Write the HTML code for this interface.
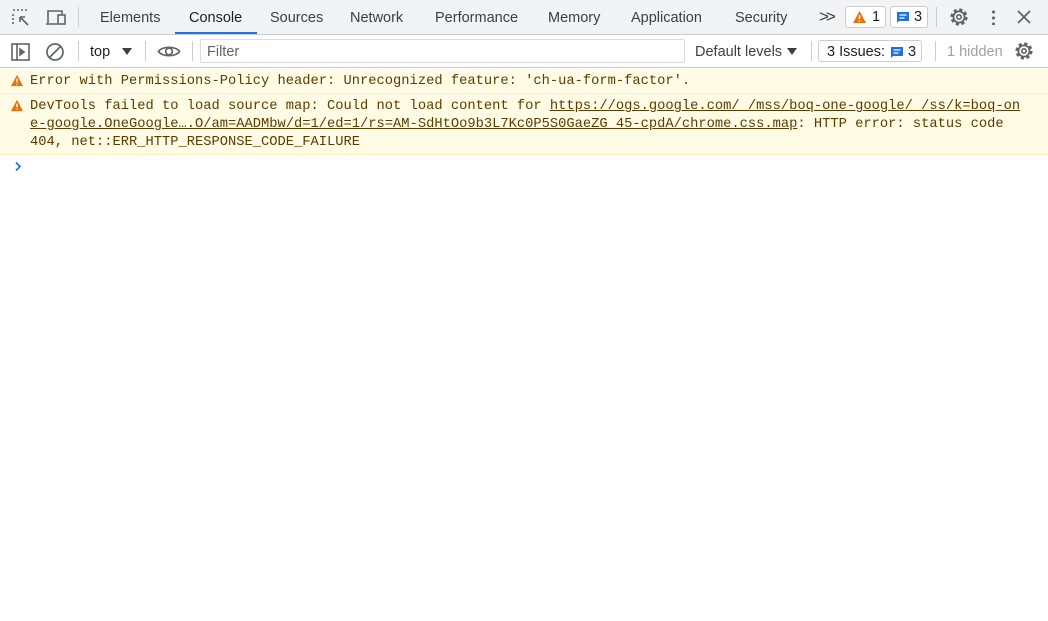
<!DOCTYPE html>
<html><head><style>
*{box-sizing:border-box;margin:0;padding:0}
body{width:1048px;height:621px;background:#fff;font-family:"Liberation Sans",sans-serif;font-size:14px;color:#1f1f1f;position:relative;overflow:hidden}
.bar1{position:absolute;top:0;left:0;width:1048px;height:35px;background:#f1f3f4;border-bottom:1px solid #cbcdd1}
.bar2{position:absolute;top:35px;left:0;width:1048px;height:33px;background:#fff;border-bottom:1px solid #cbcdd1}
.t{position:absolute;top:10px;font-size:14.5px;color:#3c4043}
.sep{position:absolute;width:1px;background:#cbcdd1}
.msg{position:absolute;left:0;width:1048px;background:#fffbe5;border-bottom:1px solid #fff0c0;font-family:"Liberation Mono",monospace;font-size:13.75px;color:#5c3c00;line-height:18px;white-space:pre}
.msg span.u{text-decoration:underline}
.warn{position:absolute;left:10px}
.badge{position:absolute;border:1px solid #cbcdd1;border-radius:3px;height:22px;background:#fff}
</style></head><body>
<svg width="0" height="0" style="position:absolute"><defs><g id="gear"><circle cx="10" cy="10" r="7" fill="none" stroke="#5f6368" stroke-width="3.2" stroke-dasharray="3 2.5"/><circle cx="10" cy="10" r="5.6" fill="none" stroke="#5f6368" stroke-width="1.8"/><circle cx="10" cy="10" r="2.2" fill="none" stroke="#5f6368" stroke-width="1.6"/></g></defs></svg>
<div class="bar1">
<svg style="position:absolute;left:11px;top:8px" width="20" height="20" viewBox="0 0 20 20" fill="none" stroke="#5f6368" stroke-width="1.6"><path d="M2 2h2M6 2h2M10 2h2M2 6v2M2 10v2M2 14v2h2M14 2h2v2" stroke-dasharray="2 2"/><path d="M9 9l8 8M9 9h5M9 9v5"/></svg>
<svg style="position:absolute;left:45px;top:8px" width="22" height="20" viewBox="0 0 22 20" fill="none" stroke="#5f6368" stroke-width="1.6"><path d="M3 15V3h14v3M1 16h11"/><rect x="13" y="7" width="7" height="9"/></svg>
<div class="sep" style="left:78px;top:7px;height:20px"></div>
<div class="t" style="left:100px">Elements</div>
<div class="t" style="left:189px;color:#1f1f1f">Console</div>
<div style="position:absolute;left:175px;top:32px;width:82px;height:2px;background:#1a73e8"></div>
<div class="t" style="left:270px">Sources</div>
<div class="t" style="left:350px">Network</div>
<div class="t" style="left:435px">Performance</div>
<div class="t" style="left:548px">Memory</div>
<div class="t" style="left:631px">Application</div>
<div class="t" style="left:735px">Security</div>
<div class="t" style="left:819px;font-size:17px;top:7px;letter-spacing:-3px">&gt;&gt;</div>
<div class="badge" style="left:845px;top:6px;width:41px"><svg style="position:absolute;left:6px;top:3px" width="15" height="14" viewBox="0 0 15 14"><path d="M7.5 1L14 13H1z" fill="#e8710a"/><path d="M7.5 5v4M7.5 10.5v1" stroke="#fff" stroke-width="1.5"/></svg><span style="position:absolute;left:26px;top:2px;font-size:14.5px">1</span></div>
<div class="badge" style="left:890px;top:6px;width:38px"><svg style="position:absolute;left:5px;top:4px" width="14" height="13" viewBox="0 0 14 13"><path d="M1 1h12v9H3l-2 2z" fill="#1a73e8"/><path d="M3.5 4h7M3.5 7h5" stroke="#fff" stroke-width="1.2"/></svg><span style="position:absolute;left:23px;top:2px;font-size:14.5px">3</span></div>
<div class="sep" style="left:936px;top:7px;height:20px"></div>
<svg style="position:absolute;left:949px;top:7px" width="20" height="20" viewBox="0 0 20 20"><use href="#gear"/></svg>
<div style="position:absolute;left:992px;top:9px;width:3px;height:16px;background:radial-gradient(circle,#5f6368 1.4px,transparent 1.6px) 0 0/3px 6px"></div>
<svg style="position:absolute;left:1017px;top:10px" width="14" height="14" viewBox="0 0 14 14" stroke="#5f6368" stroke-width="1.8"><path d="M1 1l12 12M13 1L1 13"/></svg>
</div>
<div class="bar2">
<svg style="position:absolute;left:11px;top:8px" width="19" height="18" viewBox="0 0 19 18" fill="none" stroke="#5f6368" stroke-width="1.6"><rect x="1" y="1" width="17" height="16"/><path d="M6 1v16"/><path d="M9 6l4 3-4 3z" fill="#5f6368"/></svg>
<svg style="position:absolute;left:45px;top:7px" width="20" height="20" viewBox="0 0 20 20" fill="none" stroke="#5f6368" stroke-width="1.7"><circle cx="10" cy="10" r="8"/><path d="M4.5 15.5l11-11"/></svg>
<div class="sep" style="left:78px;top:6px;height:20px"></div>
<div class="t" style="left:90px;top:9px;color:#1f1f1f">top</div>
<div style="position:absolute;left:122px;top:13px;border-left:5px solid transparent;border-right:5px solid transparent;border-top:7px solid #3c4043"></div>
<div class="sep" style="left:145px;top:6px;height:20px"></div>
<svg style="position:absolute;left:157px;top:9px" width="24" height="15" viewBox="0 0 24 15" fill="none" stroke="#5f6368" stroke-width="1.7"><path d="M1.5 7.5C5 2 19 2 22.5 7.5C19 13 5 13 1.5 7.5z"/><circle cx="12" cy="7.5" r="3.3"/></svg>
<div class="sep" style="left:192px;top:6px;height:20px"></div>
<div style="position:absolute;left:200px;top:4px;width:485px;height:24px;border:1px solid #dadce0;border-radius:2px"><span style="position:absolute;left:6px;top:4px;font-size:14.5px;color:#5f6368">Filter</span></div>
<div class="t" style="left:695px;top:9px;color:#3c4043">Default levels</div>
<div style="position:absolute;left:787px;top:13px;border-left:5px solid transparent;border-right:5px solid transparent;border-top:7px solid #3c4043"></div>
<div class="sep" style="left:811px;top:6px;height:20px"></div>
<div class="badge" style="left:818px;top:5px;width:104px"><span style="position:absolute;left:8px;top:3px;font-size:14.5px">3 Issues:</span><svg style="position:absolute;left:71px;top:5px" width="14" height="13" viewBox="0 0 14 13"><path d="M1 1h12v9H3l-2 2z" fill="#1a73e8"/><path d="M3.5 4h7M3.5 7h5" stroke="#fff" stroke-width="1.2"/></svg><span style="position:absolute;left:89px;top:3px;font-size:14.5px">3</span></div>
<div class="sep" style="left:935px;top:6px;height:20px"></div>
<div class="t" style="left:947px;top:9px;color:#9aa0a6">1 hidden</div>
<svg style="position:absolute;left:1014px;top:6px" width="20" height="20" viewBox="0 0 20 20"><use href="#gear"/></svg>
</div>
<div class="msg" style="top:69px;height:25px;padding:4px 0 0 30px">Error with Permissions-Policy header: Unrecognized feature: 'ch-ua-form-factor'.</div>
<div class="msg" style="top:94px;height:61px;padding:4px 0 0 30px">DevTools failed to load source map: Could not load content for <span class="u">https://ogs.google.com/_/mss/boq-one-google/_/ss/k=boq-on</span>
<span class="u">e-google.OneGoogle….O/am=AADMbw/d=1/ed=1/rs=AM-SdHtOo9b3L7Kc0P5S0GaeZG_45-cpdA/chrome.css.map</span>: HTTP error: status code
404, net::ERR_HTTP_RESPONSE_CODE_FAILURE</div>
<svg class="warn" style="top:74px" width="14" height="13" viewBox="0 0 15 14"><path d="M7.5 1L14 13H1z" fill="#e8710a"/><path d="M7.5 5v4M7.5 10.5v1" stroke="#fff" stroke-width="1.5"/></svg>
<svg class="warn" style="top:99px" width="14" height="13" viewBox="0 0 15 14"><path d="M7.5 1L14 13H1z" fill="#e8710a"/><path d="M7.5 5v4M7.5 10.5v1" stroke="#fff" stroke-width="1.5"/></svg>
<svg style="position:absolute;left:14px;top:161px" width="8" height="11" viewBox="0 0 8 11" fill="none" stroke="#1a73e8" stroke-width="1.6"><path d="M2 1.5l4 4-4 4"/></svg>
</body></html>
